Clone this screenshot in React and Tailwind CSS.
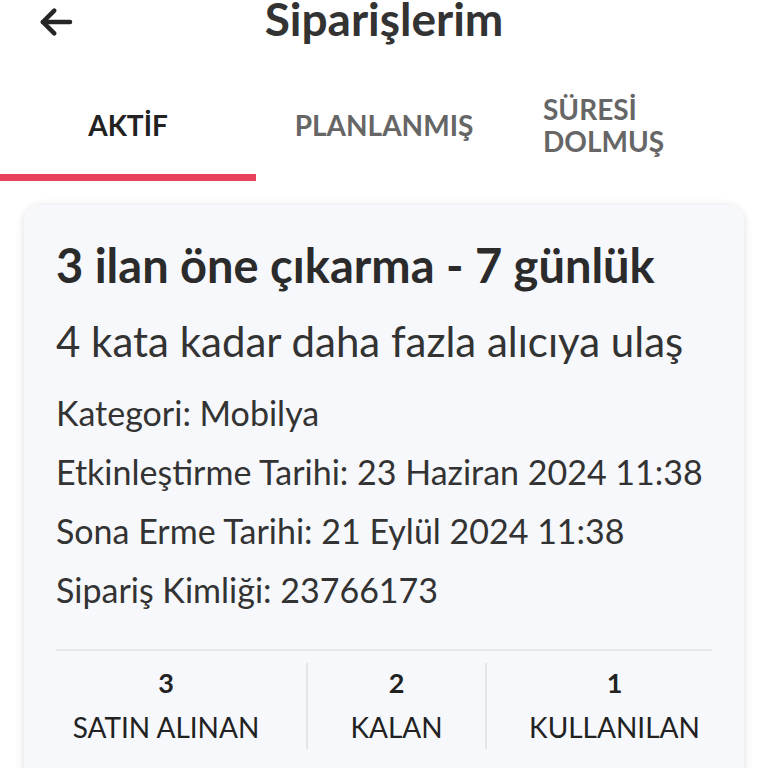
const details = [
  "Kategori: Mobilya",
  "Etkinleştirme Tarihi: 23 Haziran 2024 11:38",
  "Sona Erme Tarihi: 21 Eylül 2024 11:38",
  "Sipariş Kimliği: 23766173",
];

const stats = [
  { value: "3", label: "SATIN ALINAN", pad: "pr-[30px]" },
  { value: "2", label: "KALAN", pad: "" },
  { value: "1", label: "KULLANILAN", pad: "pl-[30px]" },
];

function BackArrow() {
  return (
    <svg width="42" height="42" viewBox="0 0 24 24" fill="none" stroke="#262626" strokeWidth="2.6" strokeLinecap="round" strokeLinejoin="round">
      <path d="M20 12H4.5" />
      <path d="M11 5.5 4.5 12l6.5 6.5" />
    </svg>
  );
}

export default function App() {
  return (
    <div className="w-[768px] h-[768px] overflow-hidden bg-white font-['Lato',_sans-serif] text-[#333]">
      {/* header */}
      <div className="relative h-[44px] flex items-center justify-center">
        <div className="absolute left-[35px] top-[1px]">
          <BackArrow />
        </div>
        <h1 className="text-[46px] font-bold leading-[46px] text-[#333] -mt-[6px]">Siparişlerim</h1>
      </div>

      {/* tabs */}
      <div className="grid grid-cols-3 mt-[46px]">
        <div className="h-[91px] flex flex-col">
          <div className="flex-1 flex items-center justify-center pb-[14px] text-[28px] font-bold text-[#222]">AKTİF</div>
          <div className="h-[7px] bg-[#e8425a]" />
        </div>
        <div className="h-[91px] flex items-center justify-center pb-[21px] text-[28px] font-bold text-[#666]">PLANLANMIŞ</div>
        <div className="h-[91px] flex items-center pl-[31px] pb-[21px] text-[28px] font-bold text-[#666] leading-[32px]">
          SÜRESİ<br />DOLMUŞ
        </div>
      </div>

      {/* card */}
      <div className="mx-[24px] mt-[24px] rounded-[16px] bg-[#f7f8fb] shadow-[0_1px_8px_rgba(0,0,0,0.13)] px-[32px] pt-[36px] pb-[40px]">
        <h2 className="text-[47px] font-bold leading-[48px] text-[#2b2b2b]">3 ilan öne çıkarma - 7 günlük</h2>
        <p className="mt-[30px] text-[42px] leading-[44px] text-[#333]">4 kata kadar daha fazla alıcıya ulaş</p>
        <div className="mt-[20px] flex flex-col">
          {details.map((d, i) => (
            <div key={i} className="h-[59px] flex items-center text-[34px] text-[#333]">{d}</div>
          ))}
        </div>
        <div className="mt-[30px] border-t-2 border-[#e6e8ec] grid grid-cols-[250px_179px_227px] pt-[12px]">
          {stats.map((s, i) => (
            <div key={i} className={"flex flex-col items-center py-[4px] " + s.pad + (i > 0 ? " border-l-2 border-[#e3e5e9]" : "")}>
              <div className="text-[27px] font-bold leading-[36px] text-[#222] -mt-[2px]">{s.value}</div>
              <div className="mt-[8px] text-[28px] leading-[36px] text-[#222]">{s.label}</div>
            </div>
          ))}
        </div>
      </div>
    </div>
  );
}
